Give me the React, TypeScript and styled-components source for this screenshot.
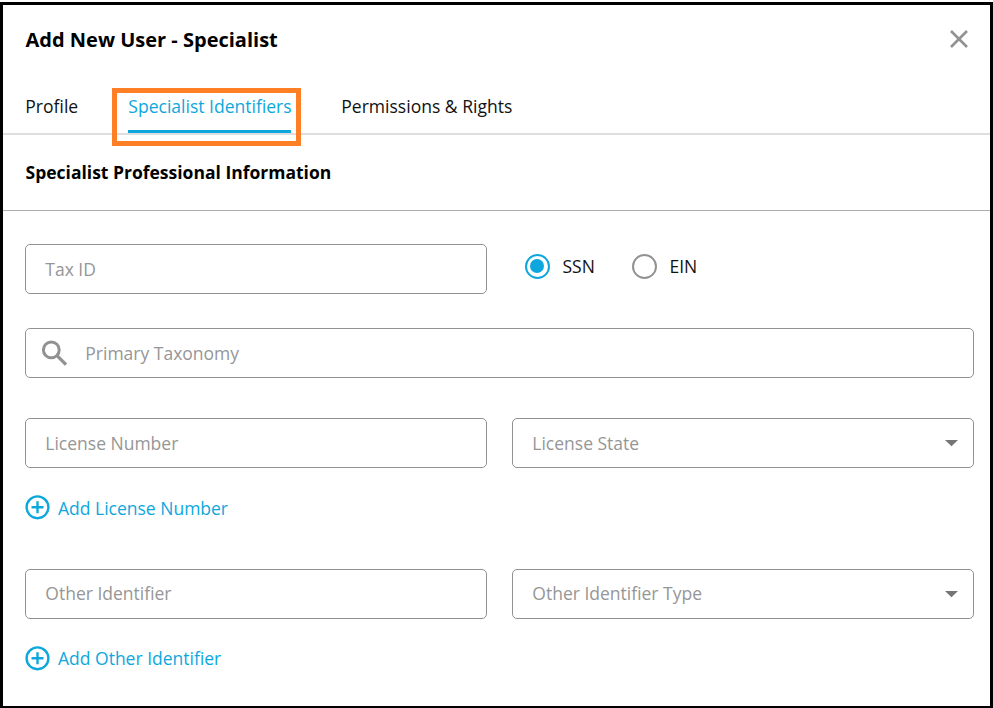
import React from 'react';
import styled, { createGlobalStyle } from 'styled-components';

const blue = '#0ea7dd';
const grey = '#929292';

const GlobalStyle = createGlobalStyle`
  *, *::before, *::after { box-sizing: border-box; }
  body { margin: 0; background: #fff; color: #000; font-family: "Open Sans", "Noto Sans", sans-serif; overflow: hidden; }
`;

const Page = styled.div`
  height: 708px;
  padding-top: 2px;
`;

const Dialog = styled.main`
  height: 706px;
  border: 3px solid #000;
  border-bottom-width: 2px;
  background: #fff;
`;

const Header = styled.header`
  display: flex;
  justify-content: space-between;
  height: 83px;
  padding: 22px 19px 0 22.5px;
`;

const Title = styled.h1`
  margin: 0;
  font-size: 20px;
  line-height: 26px;
  font-weight: 700;
`;

const CloseButton = styled.button`
  display: flex;
  width: 24px;
  height: 24px;
  padding: 0;
  border: 0;
  background: none;
`;

const Tabs = styled.nav`
  display: flex;
  height: 47px;
  padding-left: 22px;
  border-bottom: 2px solid #dedede;
`;

const Tab = styled.a<{ $active?: boolean; $width: number }>`
  position: relative;
  width: ${(p) => p.$width}px;
  height: 45px;
  margin-right: 50px;
  padding-top: 6px;
  border-bottom: 3px solid ${(p) => (p.$active ? blue : 'transparent')};
  color: ${(p) => (p.$active ? blue : '#111')};
  font-size: 17.55px;
  line-height: 25px;
  font-weight: 400;
  text-indent: 0.3px;
  white-space: nowrap;
`;

const Highlight = styled.span`
  position: absolute;
  top: 0;
  left: -16px;
  width: 189px;
  height: 58px;
  border: 5px solid #ff7f27;
`;

const SectionTitle = styled.h2`
  height: 76px;
  margin: 0;
  padding: 25px 22px 0 22.5px;
  border-bottom: 1px solid #aeaeae;
  font-size: 17.5px;
  line-height: 25px;
  font-weight: 700;
`;

const Form = styled.form`
  padding: 33px 16px 0 22px;
`;

const Row = styled.div<{ $gap: number }>`
  display: grid;
  grid-template-columns: 462px 462px;
  column-gap: 25px;
  margin-bottom: ${(p) => p.$gap}px;
`;

const Field = styled.div`
  display: flex;
  align-items: center;
  height: 50px;
  padding: 0 12px 0 19px;
  border: 1px solid ${grey};
  border-radius: 5px;
`;

const SearchField = styled(Field)`
  margin-bottom: 40px;
  padding-left: 13px;
`;

const Label = styled.span<{ $raised?: boolean }>`
  flex: 1;
  padding-bottom: ${(p) => (p.$raised ? 2 : 0)}px;
  color: #969696;
  font-size: 17.5px;
  line-height: 25px;
  font-weight: 400;
  text-indent: 0.3px;
  white-space: nowrap;
`;

const Glyph = styled.svg`
  display: block;
  flex: none;
`;

const SearchGlyph = styled(Glyph)`
  margin-right: 14px;
`;

const Radios = styled.div`
  display: flex;
  align-items: flex-start;
  padding: 10px 0 0 13px;
`;

const Radio = styled.label`
  display: flex;
  align-items: center;
  gap: 12.5px;
  width: 107px;
  color: #111;
  font-size: 17.5px;
  line-height: 25px;
  font-weight: 400;
`;

const RadioMark = styled.span<{ $on?: boolean }>`
  display: grid;
  place-items: center;
  width: 25px;
  height: 25px;
  border: 2px solid ${(p) => (p.$on ? blue : grey)};
  border-radius: 50%;

  &::after {
    content: '';
    width: 14px;
    height: 14px;
    margin: 0 1px 1px 0;
    border-radius: 50%;
    background: ${(p) => (p.$on ? blue : 'transparent')};
  }
`;

const AddButton = styled.button<{ $gap?: number }>`
  display: flex;
  align-items: center;
  gap: 8px;
  height: 25px;
  margin-bottom: ${(p) => p.$gap ?? 0}px;
  padding: 0;
  border: 0;
  background: none;
  color: ${blue};
  font: 400 17.5px/25px "Open Sans", "Noto Sans", sans-serif;
  white-space: nowrap;
`;

const AddText = styled.span<{ $lowered?: boolean }>`
  padding-top: ${(p) => (p.$lowered ? 2 : 0)}px;
`;

const Plus = () => (
  <Glyph width="25" height="25" viewBox="0 0 25 25" fill="none" stroke={blue} strokeWidth="2.4">
    <circle cx="12.5" cy="12.3" r="10.9" />
    <path d="M12.5 6.3v12M6.5 12.3h12" />
  </Glyph>
);

const Caret = () => (
  <Glyph width="18" height="10" viewBox="0 0 18 10">
    <path d="M2 2h13L8.5 8.3z" fill="#757575" />
  </Glyph>
);

export default function App() {
  return (
    <Page>
      <GlobalStyle />
      <Dialog>
        <Header>
          <Title>Add New User - Specialist</Title>
          <CloseButton aria-label="Close">
            <Glyph width="24" height="24" viewBox="0 0 24 24" fill="none" stroke={grey} strokeWidth="2.6">
              <path d="M4 4l16 16M20 4L4 20" />
            </Glyph>
          </CloseButton>
        </Header>
        <Tabs>
          <Tab $width={53}>Profile</Tab>
          <Tab $width={163} $active>
            Specialist Identifiers
            <Highlight />
          </Tab>
          <Tab $width={172}>Permissions &amp; Rights</Tab>
        </Tabs>
        <SectionTitle>Specialist Professional Information</SectionTitle>
        <Form>
          <Row $gap={34}>
            <Field><Label>Tax ID</Label></Field>
            <Radios>
              <Radio><RadioMark $on />SSN</Radio>
              <Radio><RadioMark />EIN</Radio>
            </Radios>
          </Row>
          <SearchField>
            <SearchGlyph width="32" height="32" viewBox="0 0 32 32" fill="none" stroke={grey} strokeWidth="3">
              <circle cx="12.3" cy="12.9" r="7.9" />
              <path d="M18 18.6l9 9" strokeWidth="3.4" />
            </SearchGlyph>
            <Label>Primary Taxonomy</Label>
          </SearchField>
          <Row $gap={27}>
            <Field><Label>License Number</Label></Field>
            <Field><Label>License State</Label><Caret /></Field>
          </Row>
          <AddButton type="button" $gap={49}><Plus /><AddText $lowered>Add License Number</AddText></AddButton>
          <Row $gap={27}>
            <Field><Label $raised>Other Identifier</Label></Field>
            <Field><Label $raised>Other Identifier Type</Label><Caret /></Field>
          </Row>
          <AddButton type="button"><Plus /><AddText>Add Other Identifier</AddText></AddButton>
        </Form>
      </Dialog>
    </Page>
  );
}
